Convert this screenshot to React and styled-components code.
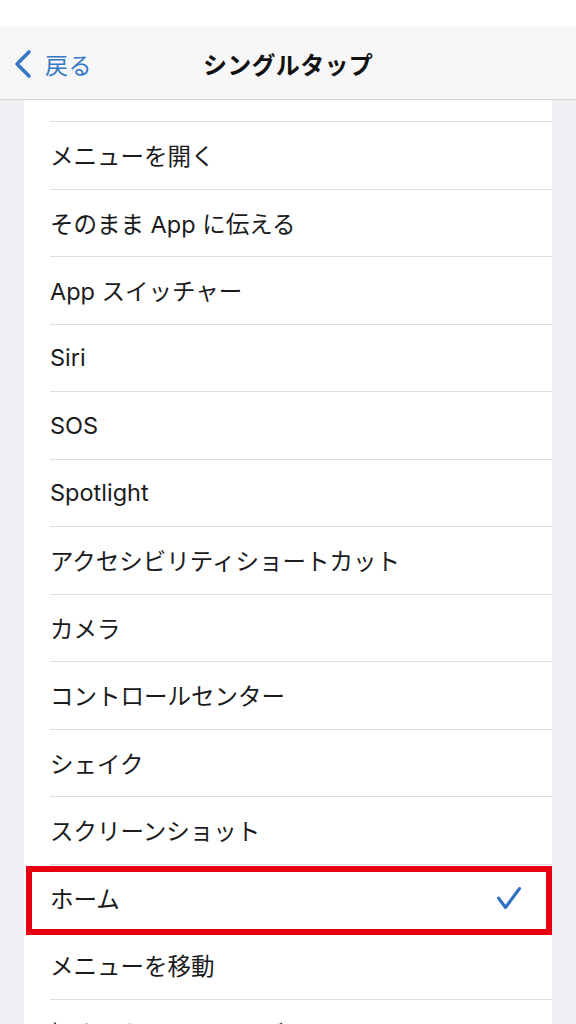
import React from "react";
import styled, { createGlobalStyle } from "styled-components";

const GlobalStyle = createGlobalStyle`
  html, body {
    margin: 0;
    padding: 0;
    background: #efeff4;
  }
  body {
    font-family: Inter, "Noto Sans CJK JP", sans-serif;
    -webkit-font-smoothing: antialiased;
  }
`;

const items = [
  { id: "hidden", label: "" },
  { id: "menu", label: "メニューを開く" },
  { id: "pass", label: "そのまま App に伝える" },
  { id: "switcher", label: "App スイッチャー" },
  { id: "siri", label: "Siri" },
  { id: "sos", label: "SOS" },
  { id: "spotlight", label: "Spotlight" },
  { id: "shortcut", label: "アクセシビリティショートカット" },
  { id: "camera", label: "カメラ" },
  { id: "control", label: "コントロールセンター" },
  { id: "shake", label: "シェイク" },
  { id: "screenshot", label: "スクリーンショット" },
  { id: "home", label: "ホーム", checked: true, highlighted: true },
  { id: "move", label: "メニューを移動" },
  { id: "drag", label: "押さえたままドラッグ" },
];

export default function App() {
  return (
    <>
      <GlobalStyle />
      <Screen>
        <StatusStrip />
        <NavBar>
          <BackButton>
            <svg width="20" height="30" viewBox="0 0 20 30">
              <path
                d="M16 3 L4 15 L16 27"
                fill="none"
                stroke="#3478c6"
                strokeWidth="3.6"
                strokeLinecap="round"
                strokeLinejoin="round"
              />
            </svg>
            <BackText>戻る</BackText>
          </BackButton>
          <Title>シングルタップ</Title>
          <span />
        </NavBar>
        <Content>
          <List>
            {items.map((item) => (
              <Row key={item.id}>
                <RowInner>
                  <Label>{item.label}</Label>
                  {item.checked && (
                    <svg width="26" height="24" viewBox="0 0 26 24">
                      <path
                        d="M2.5 12 L9.5 21.5 L23.5 2.5"
                        fill="none"
                        stroke="#2f6fc4"
                        strokeWidth="3"
                        strokeLinecap="round"
                        strokeLinejoin="round"
                      />
                    </svg>
                  )}
                </RowInner>
                {item.highlighted && <Highlight />}
              </Row>
            ))}
          </List>
        </Content>
      </Screen>
    </>
  );
}

const Screen = styled.div`
  width: 576px;
  height: 1024px;
  display: flex;
  flex-direction: column;
  overflow: hidden;
  background: #efeff4;
`;

const StatusStrip = styled.div`
  height: 27px;
  background: #ffffff;
  flex-shrink: 0;
`;

const NavBar = styled.div`
  height: 72px;
  flex-shrink: 0;
  background: #f7f7f8;
  border-bottom: 1px solid #d6d6d8;
  display: grid;
  grid-template-columns: 1fr auto 1fr;
  align-items: center;
  position: relative;
  z-index: 2;
`;

const BackButton = styled.div`
  display: flex;
  align-items: center;
  gap: 12px;
  padding-left: 13px;
  margin-top: 2px;
`;

const BackText = styled.span`
  font-size: 23px;
  color: #3478c6;
  letter-spacing: 0.5px;
`;

const Title = styled.div`
  font-size: 24px;
  font-weight: 700;
  color: #111111;
  letter-spacing: 0.3px;
`;

const Content = styled.div`
  flex: 1;
  overflow: hidden;
  padding: 0 24px;
`;

const List = styled.div`
  background: #ffffff;
  margin-top: -45.5px;
`;

const Row = styled.div`
  position: relative;
  padding-left: 26px;
`;

const RowInner = styled.div`
  height: 66.5px;
  border-bottom: 1px solid #dededf;
  display: flex;
  align-items: center;
  justify-content: space-between;
  padding-right: 30px;
`;

const Label = styled.span`
  font-size: 23.5px;
  color: #1b1b1d;
  white-space: nowrap;
`;

const Highlight = styled.div`
  position: absolute;
  top: 1px;
  left: 2px;
  right: 0;
  bottom: -3px;
  border: 6px solid #e60012;
  pointer-events: none;
`;
